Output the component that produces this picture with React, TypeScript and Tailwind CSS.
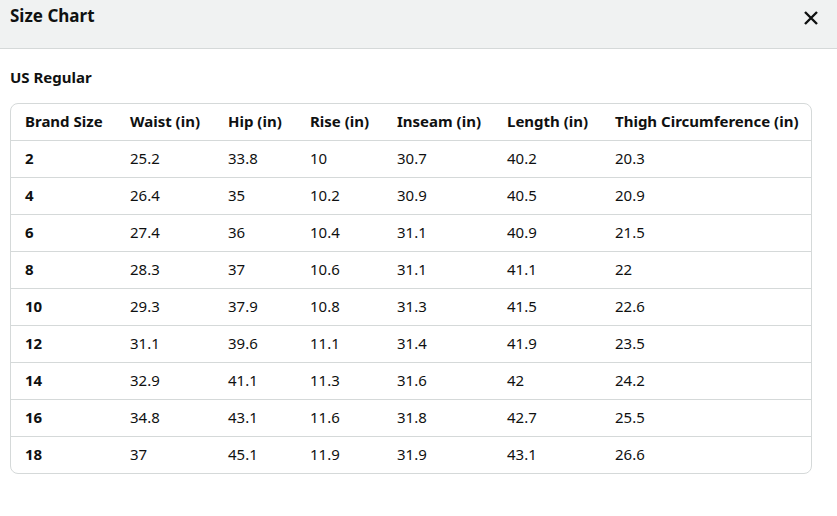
import React from "react";

const headers = ["Brand Size", "Waist (in)", "Hip (in)", "Rise (in)", "Inseam (in)", "Length (in)", "Thigh Circumference (in)"];
const rows = [
  ["2", "25.2", "33.8", "10", "30.7", "40.2", "20.3"],
  ["4", "26.4", "35", "10.2", "30.9", "40.5", "20.9"],
  ["6", "27.4", "36", "10.4", "31.1", "40.9", "21.5"],
  ["8", "28.3", "37", "10.6", "31.1", "41.1", "22"],
  ["10", "29.3", "37.9", "10.8", "31.3", "41.5", "22.6"],
  ["12", "31.1", "39.6", "11.1", "31.4", "41.9", "23.5"],
  ["14", "32.9", "41.1", "11.3", "31.6", "42", "24.2"],
  ["16", "34.8", "43.1", "11.6", "31.8", "42.7", "25.5"],
  ["18", "37", "45.1", "11.9", "31.9", "43.1", "26.6"],
];
const widths = ["w-[105px]", "w-[98px]", "w-[82px]", "w-[87px]", "w-[110px]", "w-[108px]", "w-auto"];

export default function App() {
  return (
    <div className="w-[837px] h-[516px] bg-white text-[#0f1111]" style={{ fontFamily: '"Noto Sans", "Open Sans", sans-serif' }}>
      <div className="h-[49px] bg-[#f0f2f2] border-b border-[#d5d9d9] flex items-start justify-between pl-[10px] pr-[18px]">
        <div className="text-[17px] font-bold leading-[32px]">Size Chart</div>
        <svg width="16" height="16" viewBox="0 0 16 16" className="mt-[10px]">
          <path d="M2 2 L14 14 M14 2 L2 14" stroke="#0f1111" strokeWidth="2.4" strokeLinecap="butt" />
        </svg>
      </div>
      <div className="px-[10px]">
        <div className="text-[15px] font-bold leading-[20px] mt-[18px] mb-[16px]">US Regular</div>
        <div className="w-[802px] border border-[#d5d9d9] rounded-[8px] overflow-hidden">
          <table className="w-full border-collapse text-[15px] table-fixed">
            <thead>
              <tr className="h-[36px]">
                {headers.map((h, i) => (
                  <th key={i} className={`${widths[i]} text-left font-bold pl-[14px] pr-0 py-0 pb-[2px] whitespace-nowrap`}>{h}</th>
                ))}
              </tr>
            </thead>
            <tbody>
              {rows.map((r, ri) => (
                <tr key={ri} className="h-[37px] border-t border-[#d5d9d9]">
                  {r.map((c, ci) => (
                    <td key={ci} className={`pl-[14px] py-0 pb-[1px] ${ci === 0 ? "font-bold" : ""}`}>{c}</td>
                  ))}
                </tr>
              ))}
            </tbody>
          </table>
        </div>
      </div>
    </div>
  );
}
